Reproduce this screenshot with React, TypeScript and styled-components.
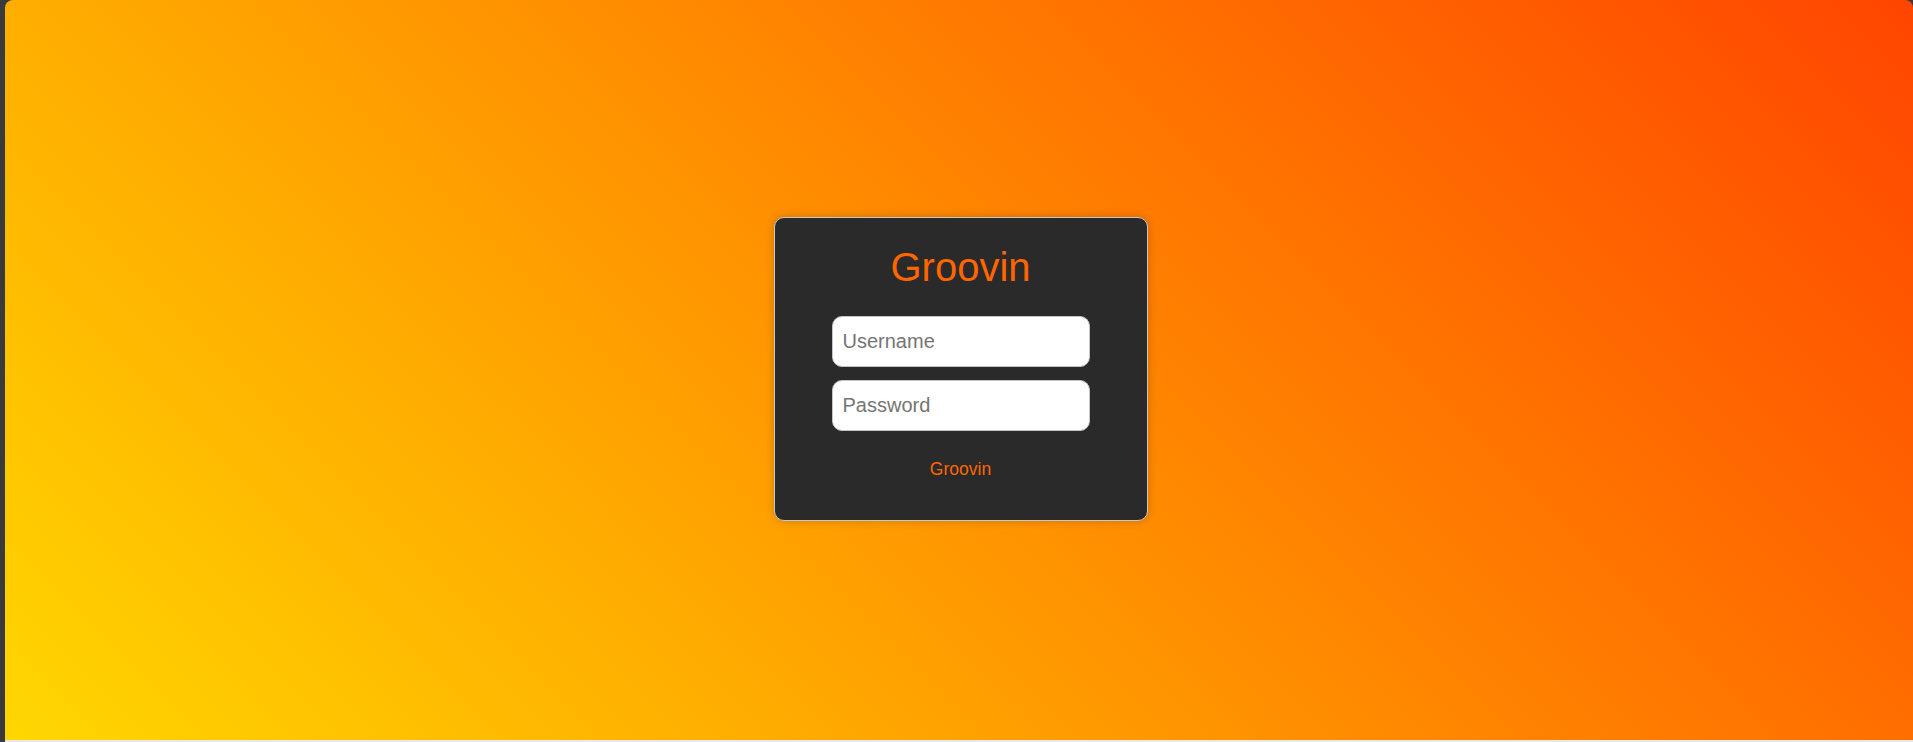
import * as React from 'react';
import styled, { createGlobalStyle } from 'styled-components';

const GlobalStyle = createGlobalStyle`
  html, body {
    margin: 0;
    padding: 0;
    background-color: #3a3a3a;
    font-family: "Liberation Sans", Arial, sans-serif;
  }
`;

const Page = styled.div`
  display: flex;
  flex-direction: column;
  padding-left: 5px;
  height: 742px;
  box-sizing: border-box;
`;

const Stage = styled.main`
  flex: 0 0 740px;
  display: flex;
  align-items: center;
  justify-content: center;
  padding: 0 0 2px 3px;
  box-sizing: border-box;
  border-radius: 8px 8px 0 0;
  background: linear-gradient(45deg, #ffd700, #ff4500);
`;

const BottomEdge = styled.div`
  flex: 1 1 auto;
  background-color: #e8e8e8;
`;

const Card = styled.form`
  width: 372px;
  padding: 26px 0 41px;
  display: flex;
  flex-direction: column;
  align-items: center;
  background-color: #2a2a2a;
  border: 1px solid #c8c8c8;
  border-radius: 10px;
  box-shadow: 0 0 10px rgba(0, 0, 0, 0.2);
`;

const Title = styled.h1`
  margin: 0 0 26px;
  font-size: 40px;
  font-weight: normal;
  line-height: 46px;
  color: #ff6600;
`;

const Fields = styled.div`
  display: flex;
  flex-direction: column;
  gap: 13px;
`;

const Input = styled.input`
  width: 258px;
  height: 51px;
  box-sizing: border-box;
  padding: 0 10px;
  border: 1px solid #c4c4c4;
  border-radius: 10px;
  background-color: #ffffff;
  font-family: inherit;
  font-size: 20px;
  color: #333;
  outline: none;

  &::placeholder {
    color: #757575;
  }
`;

const SubmitButton = styled.button`
  margin-top: 28px;
  padding: 0;
  border: none;
  background: transparent;
  font-family: inherit;
  font-size: 17.5px;
  line-height: 20px;
  color: #ff6600;
  cursor: pointer;
`;

export default function App() {
  return (
    <>
      <GlobalStyle />
      <Page>
        <Stage>
          <Card onSubmit={(e) => e.preventDefault()}>
            <Title>Groovin</Title>
            <Fields>
              <Input type="text" placeholder="Username" />
              <Input type="password" placeholder="Password" />
            </Fields>
            <SubmitButton type="submit">Groovin</SubmitButton>
          </Card>
        </Stage>
        <BottomEdge />
      </Page>
    </>
  );
}
